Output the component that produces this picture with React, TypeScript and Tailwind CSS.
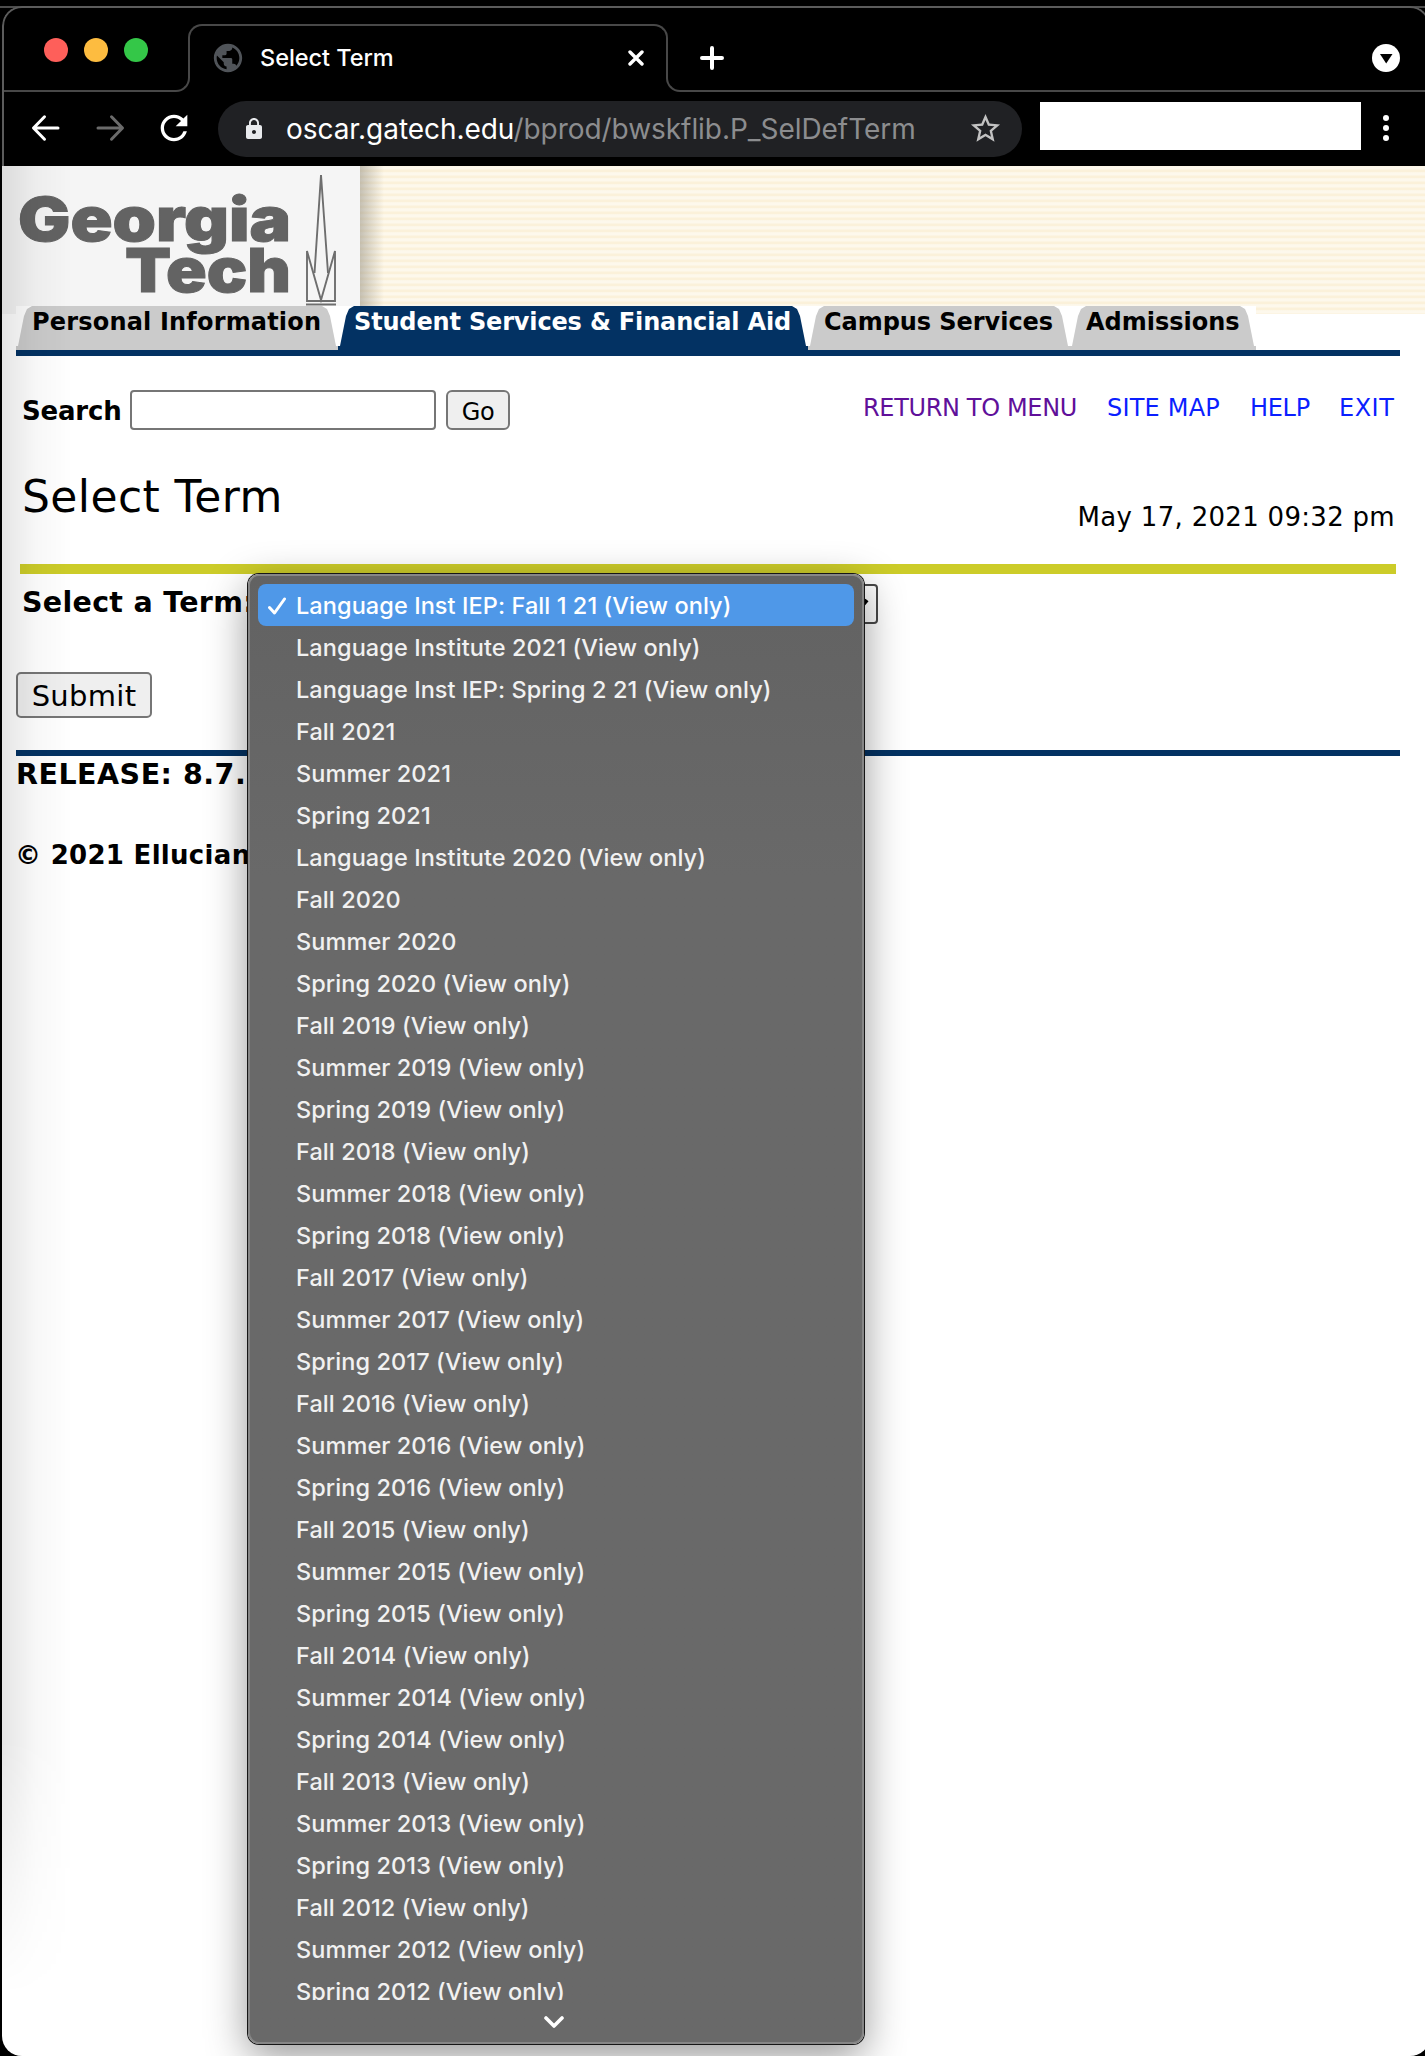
import React from "react";
import { MdLock, MdPublic, MdRefresh, MdStarBorder } from "react-icons/md";

const TERMS: string[] = [
  "Language Inst IEP: Fall 1 21 (View only)",
  "Language Institute 2021 (View only)",
  "Language Inst IEP: Spring 2 21 (View only)",
  "Fall 2021",
  "Summer 2021",
  "Spring 2021",
  "Language Institute 2020 (View only)",
  "Fall 2020",
  "Summer 2020",
  "Spring 2020 (View only)",
  ...[2019, 2018, 2017, 2016, 2015, 2014, 2013, 2012].flatMap((year) => [
    `Fall ${year} (View only)`,
    `Summer ${year} (View only)`,
    `Spring ${year} (View only)`,
  ]),
];

/* ---------- Browser chrome ---------- */

function TabOutline() {
  return (
    <div className="pointer-events-none absolute inset-x-0 top-4 grid grid-cols-[186px_476px_1fr] grid-rows-[34px_34px]">
      <div />
      <div className="-mx-[2px] rounded-t-[14px] border-2 border-b-0 border-[#484848]" />
      <div />
      <div className="rounded-br-[14px] border-r-2 border-b-2 border-[#484848]" />
      <div />
      <div className="rounded-bl-[14px] border-b-2 border-l-2 border-[#484848]" />
    </div>
  );
}

function TabStrip() {
  return (
    <div className="relative h-[84px]">
      <TabOutline />
      <div className="flex h-full items-center pt-4">
        <div className="-mt-[16px] flex gap-4 pl-[40px]">
          <span className="size-6 rounded-full bg-[#fe5f5a]" />
          <span className="size-6 rounded-full bg-[#fdbc40]" />
          <span className="size-6 rounded-full bg-[#34c748]" />
        </div>
        <MdPublic className="ml-[63px] size-[34px] shrink-0 text-[#505459]" />
        <span className="ml-[15px] w-[368px] text-[23.5px] font-medium tracking-[-0.05px] text-white">
          Select Term
        </span>
        <svg className="size-4 shrink-0" viewBox="0 0 16 16" stroke="#fff" strokeWidth="3.4" strokeLinecap="round">
          <path d="M2 2L14 14M14 2L2 14" />
        </svg>
        <svg className="ml-14 size-6 shrink-0" viewBox="0 0 24 24" stroke="#fff" strokeWidth="4" strokeLinecap="round">
          <path d="M12 2V22M2 12H22" />
        </svg>
        <svg className="ml-[648px] size-7 shrink-0" viewBox="0 0 28 28">
          <circle cx="14" cy="14" r="14" fill="#fff" />
          <path d="M8 10H20.500L14.200 19.500Z" fill="#000" />
        </svg>
      </div>
    </div>
  );
}

function Toolbar() {
  return (
    <div className="flex h-[74px] items-center pb-[2px]">
      <div className="flex h-full w-[214px] items-center">
        <svg className="ml-[26px] size-8" viewBox="0 0 32 32" fill="none" stroke="#fff" strokeWidth="3" strokeLinecap="round" strokeLinejoin="round">
          <path d="M28 16H4M14.500 4.800L3.500 16L14.500 27.200" />
        </svg>
        <svg className="ml-8 size-8" viewBox="0 0 32 32" fill="none" stroke="#6b6b6b" strokeWidth="3" strokeLinecap="round" strokeLinejoin="round">
          <path d="M4 16H28M17.500 4.800L28.500 16L17.500 27.200" />
        </svg>
        <MdRefresh className="ml-[28px] size-10 text-white" />
      </div>
      <div className="mt-[2px] flex h-14 w-[804px] shrink-0 items-center rounded-full bg-[#202124] pr-[19px] pb-[1px] pl-6">
        <MdLock className="size-6 text-[#e8eaed]" />
        <span className="ml-[20px] grow text-[28px] tracking-[-0.05px] whitespace-nowrap text-[#8c8d8f]">
          <span className="text-white">oscar.gatech.edu</span>/bprod/bwskflib.P_SelDefTerm
        </span>
        <MdStarBorder className="size-[35px] text-[#c2c2c2]" />
      </div>
      <div className="-mt-[4px] ml-[18px] h-12 w-[321px] shrink-0 bg-white" />
      <div className="ml-[22px] flex flex-col gap-1">
        <span className="size-[6px] rounded-full bg-white" />
        <span className="size-[6px] rounded-full bg-white" />
        <span className="size-[6px] rounded-full bg-white" />
      </div>
    </div>
  );
}

/* ---------- Page header ---------- */

function GeorgiaTechLogo() {
  return (
    <svg className="block h-[148px] w-[358px]" viewBox="2 166 358 148">
      <g fill="#636363" fontFamily="Inter" fontWeight="900" fontSize="61" stroke="#636363" strokeWidth="1">
        <text x="18" y="241" textLength="273" lengthAdjust="spacingAndGlyphs">
          Georgia
        </text>
        <text x="125" y="291.500" textLength="166" lengthAdjust="spacingAndGlyphs">
          Tech
        </text>
      </g>
      <g fill="none" stroke="#6e6e6e" strokeWidth="1.900">
        <path d="M307 251V301H335V251L321 300Z" />
        <path d="M314.500 273L321 175L328 273" />
        <path d="M306 304.500H336" strokeWidth="2" />
      </g>
    </svg>
  );
}

function NavTab({ label, active, className }: { label: string; active?: boolean; className: string }) {
  return (
    <div className={`h-11 bg-white ${active ? "text-white" : "text-black"} ${className}`}>
      <div
        className={`h-full pl-4 text-[24px] leading-[33px] font-bold whitespace-nowrap [clip-path:polygon(0_100%,0_40px,2px_40px,6px_20px,8px_10px,11px_3px,16px_0,calc(100%-16px)_0,calc(100%-11px)_3px,calc(100%-8px)_10px,calc(100%-6px)_20px,calc(100%-2px)_40px,100%_40px,100%_100%)] ${
          active ? "bg-[#033263]" : "bg-[#cbcbcb]"
        }`}
      >
        {label}
      </div>
    </div>
  );
}

function Banner() {
  return (
    <div className="h-[190px]">
      <div className="flex h-[148px] bg-[repeating-linear-gradient(180deg,#fcf5e4_0px,#fdf8ec_1px,#fdf8ec_3px,#fbf1da_4px,#fbf1da_6px)]">
        <div className="bg-[#f5f5f5]">
          <GeorgiaTechLogo />
        </div>
        <div className="w-6 bg-gradient-to-r from-[#8f8a7c]/50 to-transparent" />
      </div>
      <div className="relative -mt-2 ml-[14px] w-[1384px] border-b-6 border-[#033263]">
        <div className="flex">
          <NavTab label="Personal Information" className="w-[322px] tracking-[0.18px]" />
          <NavTab label="Student Services & Financial Aid" active className="w-[470px] tracking-[-0.16px]" />
          <NavTab label="Campus Services" className="w-[262px] tracking-[-0.05px]" />
          <NavTab label="Admissions" className="w-[186px]" />
        </div>
      </div>
    </div>
  );
}

/* ---------- Page body ---------- */

function PageBody() {
  return (
    <div className="pl-[14px] text-black">
      <div className="flex h-[74px] items-end pl-[6px]">
        <div className="flex h-10 items-center">
          <span className="w-[108px] pt-[2px] text-[26px] font-bold tracking-[-0.2px]">Search</span>
          <span className="h-10 w-[306px] rounded-[4px] border-2 border-[#767676] bg-white" />
          <span className="ml-[10px] flex h-10 w-16 items-center justify-center rounded-[6px] border-2 border-[#767676] bg-[#efefef] pt-[3px] text-[24px] tracking-[-0.5px]">
            Go
          </span>
        </div>
        <div className="ml-[353px] flex h-10 pb-1 text-[24px] leading-[36px] whitespace-nowrap text-[#0b1fff]">
          <span className="w-[244px] tracking-[-0.35px] text-[#60109a]">RETURN TO MENU</span>
          <span className="w-[143px] tracking-[0.2px]">SITE MAP</span>
          <span className="w-[89px] tracking-[-0.3px]">HELP</span>
          <span className="tracking-[0.5px]">EXIT</span>
        </div>
      </div>

      <div className="flex h-[134px] w-[1379px] justify-between pl-[6px]">
        <h1 className="mt-[42px] text-[44px] leading-[50px] tracking-[0.4px]">Select Term</h1>
        <span className="mt-[72px] text-[26px] leading-[30px] tracking-[0.3px]">May 17, 2021 09:32 pm</span>
      </div>

      <div className="ml-1 h-[10px] w-[1376px] bg-[#cccc29]" />

      <div className="mt-[10px] flex h-10 items-center pl-[6px]">
        <span className="w-[238px] pb-[2px] text-[28.5px] font-bold tracking-[0.3px] whitespace-nowrap">Select a Term:</span>
        <span className="flex h-10 w-[618px] items-center justify-end rounded-[4px] border-2 border-[#484848] bg-white pr-[7px]">
          <svg className="h-3 w-4" viewBox="0 0 16 12" fill="none" stroke="#000" strokeWidth="4">
            <path d="M2 2L8 9L14 2" />
          </svg>
        </span>
      </div>

      <div className="mt-12 flex h-[46px] w-[136px] items-center justify-center rounded-[5px] border-2 border-[#767676] bg-[#efefef] pt-[3px] text-[29px] tracking-[0.3px]">
        Submit
      </div>

      <div className="mt-8 h-[6px] w-[1384px] bg-[#033263]" />
      <div className="pt-[1px] text-[28.5px] leading-[35px] font-bold tracking-[0.5px]">RELEASE: 8.7.1</div>
      <div className="mt-12 text-[26px] leading-[30px] font-bold tracking-[0.3px]">
        <span className="-ml-[1px]">© 2021 Ellucian</span>
      </div>
    </div>
  );
}

/* ---------- Term menu ---------- */

function TermMenu() {
  return (
    <div className="absolute top-[574px] left-[248px] flex h-[1470px] w-[616px] flex-col rounded-[11px] border-2 border-[#868686] bg-gradient-to-b from-[#626262] to-[#696969] to-[300px] px-[8px] pt-2 font-[Inter,sans-serif] text-[23.5px] font-medium tracking-[0.08px] text-[#f1f1f1] shadow-[0_0_0_1px_#161616,0_12px_42px_rgba(0,0,0,0.42)]">
      <div className="h-[1416px] overflow-hidden">
        {TERMS.map((term, i) => (
          <div
            key={term}
            className={`flex h-[42px] items-center pl-[10px] leading-[42px] whitespace-nowrap ${
              i === 0 ? "rounded-[8px] bg-[#4f98e8] text-white" : ""
            }`}
          >
            <span className="w-[28px] shrink-0">
              {i === 0 && (
                <svg className="mt-[2px] size-[18px]" viewBox="0 0 18 18" fill="none" stroke="#fff" strokeWidth="3" strokeLinecap="round" strokeLinejoin="round">
                  <path d="M1.500 10.500L6.500 16L16.500 2" />
                </svg>
              )}
            </span>
            <span className="pt-[2px]">{term}</span>
          </div>
        ))}
      </div>
      <svg className="mt-4 ml-[286px] h-3 w-[20px]" viewBox="0 0 20 12" fill="none" stroke="#fff" strokeWidth="3.600" strokeLinecap="round" strokeLinejoin="round">
        <path d="M2 2L10 10L18 2" />
      </svg>
    </div>
  );
}

export default function App() {
  return (
    <div className="relative h-[2056px] w-[1425px] overflow-hidden bg-black">
      <div className="h-2 border-b-2 border-[#4d4d4d]" />
      <div className="-mt-[2px] ml-[2px] flex h-[2050px] w-[1428px] flex-col overflow-hidden rounded-[20px]">
        <div className="h-[160px] shrink-0 rounded-t-[20px] border-t-2 border-l-2 border-r-2 border-[#5c5c5c] bg-black font-[Inter,sans-serif]">
          <TabStrip />
          <Toolbar />
        </div>
        <div className="relative grow bg-white font-['DejaVu_Sans',sans-serif]">
          <Banner />
          <PageBody />
          <div className="pointer-events-none absolute top-0 left-0 h-[1830px] w-[70px] bg-gradient-to-r from-black/10 via-black/3 to-transparent [mask-image:linear-gradient(to_bottom,black_86%,transparent)]" />
        </div>
      </div>
      <TermMenu />
    </div>
  );
}
